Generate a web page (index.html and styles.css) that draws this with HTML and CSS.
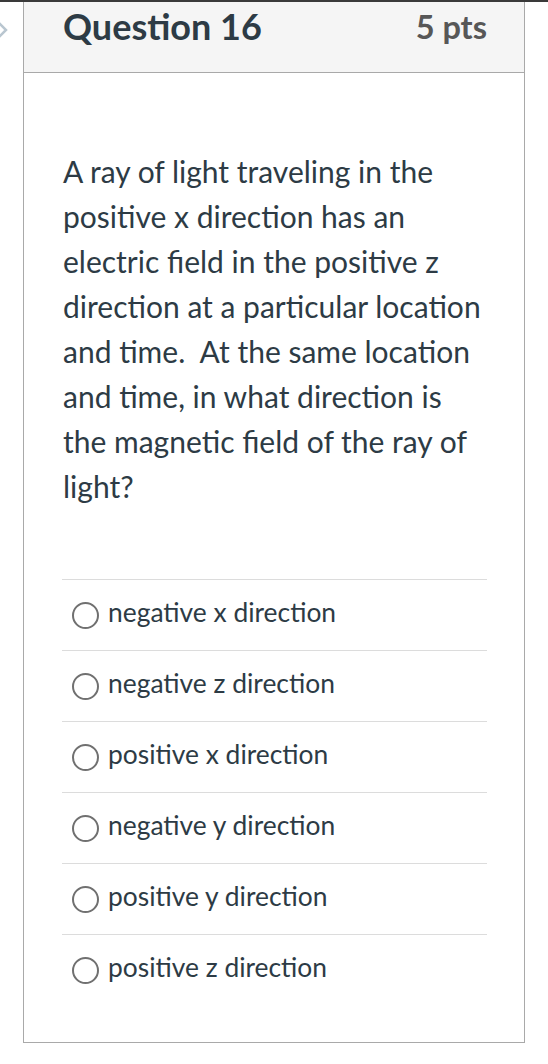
FILE: index.html
```html
<!DOCTYPE html>
<html lang="en">
<head>
<meta charset="utf-8">
<title>Question 16</title>
<link rel="stylesheet" href="styles.css">
</head>
<body>
<div class="topbar"></div>
<div class="page">
  <svg class="chevron" width="12" height="24" viewBox="0 0 12 24" aria-hidden="true">
    <polyline points="-3,3 6,12 -3,21" fill="none" stroke="#b9c6d0" stroke-width="2.5"/>
  </svg>
  <div class="card">
    <div class="card-header">
      <h2 class="q-title">Question 16</h2>
      <span class="q-points">5 pts</span>
    </div>
    <div class="card-body">
      <p class="q-text">A ray of light traveling in the positive x direction has an electric field in the positive z direction at a particular location and time.&nbsp; At the same location and time, in what direction is the magnetic field of the ray of light?</p>
      <ul class="answers">
        <li class="answer"><span class="radio"></span><span class="answer-text">negative x direction</span></li>
        <li class="answer"><span class="radio"></span><span class="answer-text">negative z direction</span></li>
        <li class="answer"><span class="radio"></span><span class="answer-text">positive x direction</span></li>
        <li class="answer"><span class="radio"></span><span class="answer-text">negative y direction</span></li>
        <li class="answer"><span class="radio"></span><span class="answer-text">positive y direction</span></li>
        <li class="answer"><span class="radio"></span><span class="answer-text">positive z direction</span></li>
      </ul>
    </div>
  </div>
</div>
</body>
</html>
```

FILE: styles.css
```css
* { box-sizing: border-box; }
html, body { margin: 0; padding: 0; background: #ffffff; }
body {
  font-family: Lato, "Noto Sans", sans-serif;
  color: #2d3b45;
}
.topbar {
  height: 2px;
  background: #3a3a3a;
}
.page {
  position: relative;
  padding-left: 23px;
}
.chevron {
  position: absolute;
  left: 0;
  top: 16px;
}
.card {
  width: 502px;
  border: 1px solid #a9a9a9;
  border-top: none;
}
.card-header {
  height: 71px;
  background: #f5f5f5;
  border-bottom: 1px solid #a9a9a9;
  display: flex;
  justify-content: space-between;
  align-items: center;
  padding: 0 37px 22px 39px;
}
.q-title {
  margin: 0;
  font-size: 36px;
  font-weight: 700;
  color: #2d3b45;
}
.q-points {
  font-size: 32.5px;
  font-weight: 700;
  color: #575757;
}
.card-body {
  padding: 76px 37px 37px 39px;
}
.q-text {
  margin: 0;
  font-size: 30px;
  line-height: 45px;
}
.answers {
  list-style: none;
  margin: 70px 0 0 -1px;
  padding: 0;
}
.answer {
  height: 71px;
  border-top: 1px solid #dcdcdc;
  display: flex;
  align-items: center;
  padding-left: 10px;
  padding-bottom: 6px;
}
.radio {
  width: 27px;
  height: 27px;
  border: 2px solid #707070;
  border-radius: 50%;
  flex: none;
  margin-right: 9px;
  position: relative;
  top: 3px;
}
.answer-text {
  font-size: 26.4px;
}
```
